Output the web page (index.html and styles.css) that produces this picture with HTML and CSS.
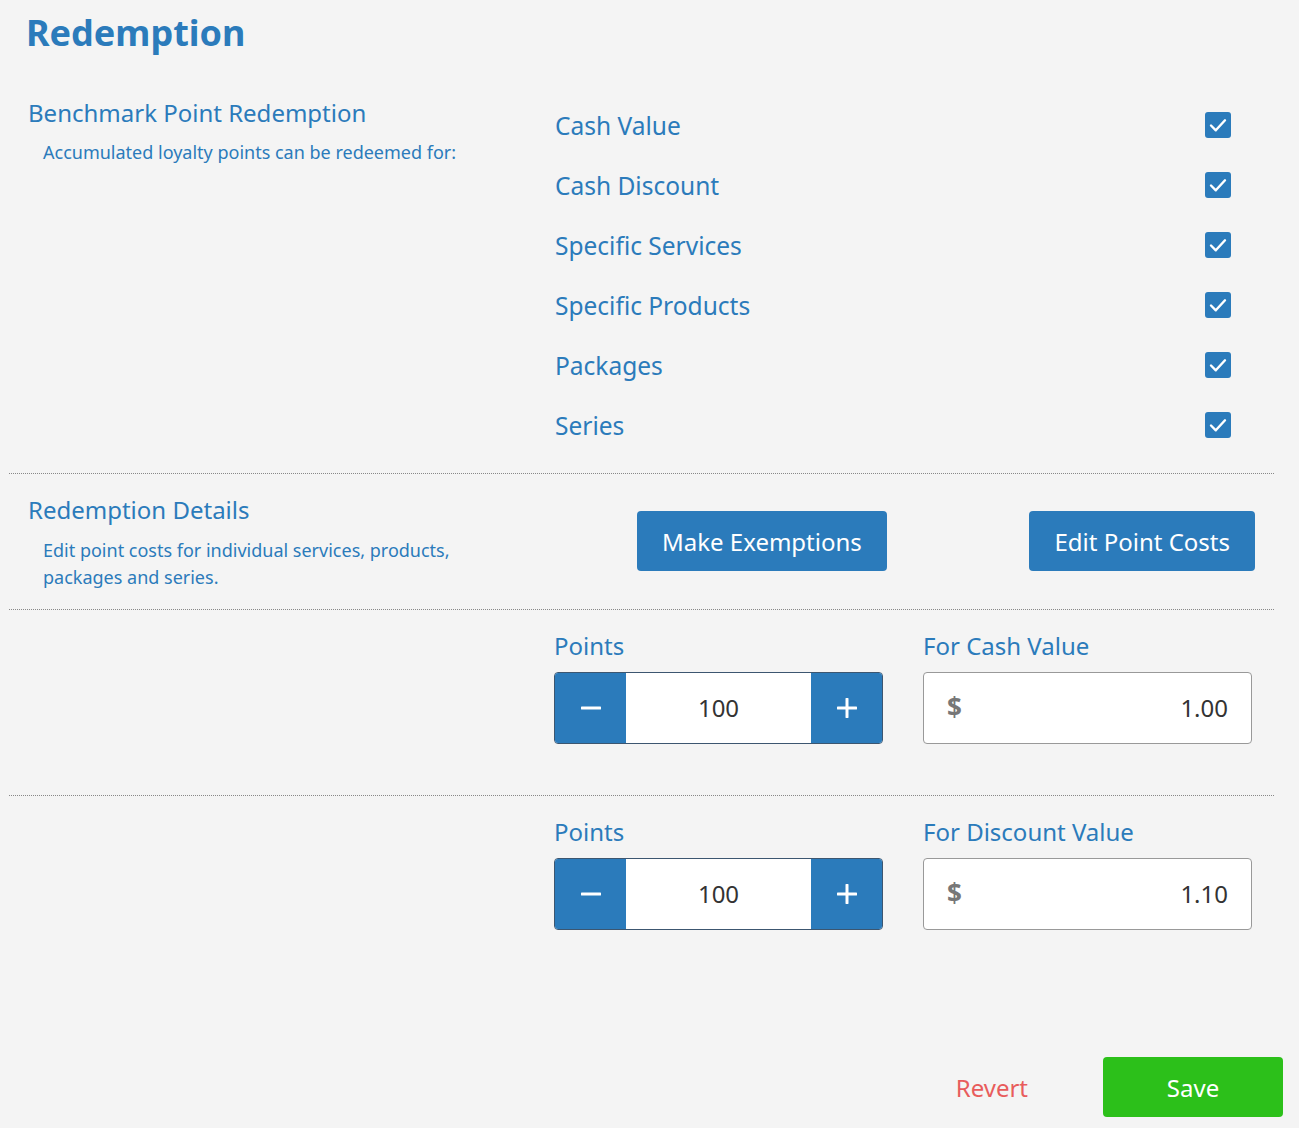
FILE: index.html
```html
<!DOCTYPE html>
<html lang="en">
<head>
    <link rel="stylesheet" href="styles.css">
    <title>Redemption</title>
</head>
<body>
<div class="page">
    <h1 class="title">Redemption</h1>

    <div class="section section-options">
        <div class="left">
            <h2>Benchmark Point Redemption</h2>
            <p>Accumulated loyalty points can be redeemed for:</p>
        </div>
        <div class="right">
            <ul class="options">
                <li><span>Cash Value</span><span class="check"><svg viewBox="0 0 26 26"><path d="M6 13.5 L10.8 18.3 L20 8.3"/></svg></span></li>
                <li><span>Cash Discount</span><span class="check"><svg viewBox="0 0 26 26"><path d="M6 13.5 L10.8 18.3 L20 8.3"/></svg></span></li>
                <li><span>Specific Services</span><span class="check"><svg viewBox="0 0 26 26"><path d="M6 13.5 L10.8 18.3 L20 8.3"/></svg></span></li>
                <li><span>Specific Products</span><span class="check"><svg viewBox="0 0 26 26"><path d="M6 13.5 L10.8 18.3 L20 8.3"/></svg></span></li>
                <li><span>Packages</span><span class="check"><svg viewBox="0 0 26 26"><path d="M6 13.5 L10.8 18.3 L20 8.3"/></svg></span></li>
                <li><span>Series</span><span class="check"><svg viewBox="0 0 26 26"><path d="M6 13.5 L10.8 18.3 L20 8.3"/></svg></span></li>
            </ul>
        </div>
    </div>

    <div class="section section-details">
        <div class="left">
            <h2>Redemption Details</h2>
            <p>Edit point costs for individual services, products, packages and series.</p>
        </div>
        <div class="right buttons">
            <button class="btn">Make Exemptions</button>
            <button class="btn">Edit Point Costs</button>
        </div>
    </div>

    <div class="section section-value">
        <div class="left"></div>
        <div class="right fields">
            <div class="field">
                <label>Points</label>
                <div class="stepper">
                    <span class="step"><svg viewBox="0 0 20 20"><path d="M1 10 H19"/></svg></span>
                    <span class="step-value">100</span>
                    <span class="step"><svg viewBox="0 0 20 20"><path d="M1 10 H19 M10 1 V19"/></svg></span>
                </div>
            </div>
            <div class="field">
                <label>For Cash Value</label>
                <div class="money">
                    <span class="currency">$</span>
                    <span class="amount">1.00</span>
                </div>
            </div>
        </div>
    </div>

    <div class="section section-value last">
        <div class="left"></div>
        <div class="right fields">
            <div class="field">
                <label>Points</label>
                <div class="stepper">
                    <span class="step"><svg viewBox="0 0 20 20"><path d="M1 10 H19"/></svg></span>
                    <span class="step-value">100</span>
                    <span class="step"><svg viewBox="0 0 20 20"><path d="M1 10 H19 M10 1 V19"/></svg></span>
                </div>
            </div>
            <div class="field">
                <label>For Discount Value</label>
                <div class="money">
                    <span class="currency">$</span>
                    <span class="amount">1.10</span>
                </div>
            </div>
        </div>
    </div>

    <div class="footer">
        <button class="revert">Revert</button>
        <button class="save">Save</button>
    </div>
</div>
</body>
</html>
```

FILE: styles.css
```css
html, body {
    margin: 0;
    padding: 0;
}

body {
    font-family: "Noto Sans", "Open Sans", sans-serif;
    color: #2b7bbb;
    background-color: #f4f4f4;
}

.page {
    width: 1265px;
    margin-left: 9px;
}

.title {
    margin: 0;
    padding: 10px 0 0 17px;
    height: 47px;
    font-size: 36px;
    font-weight: 700;
    line-height: 45px;
}

.section {
    display: flex;
    padding-left: 19px;
    border-bottom: 1px dotted #888;
}

.section .left {
    width: 527px;
    flex-shrink: 0;
}

.section .right {
    flex: 1;
}

.section h2 {
    margin: 0;
    font-size: 24px;
    font-weight: 400;
    line-height: 32px;
}

.section p {
    margin: 0;
    padding-left: 15px;
    font-size: 18px;
    line-height: 27px;
    width: 440px;
}

.section-options {
    padding-top: 40px;
    padding-bottom: 18px;
}

.section-options p {
    margin-top: 10px;
}

.options {
    list-style-type: none;
    margin: 0;
    padding: 0;
    margin-top: -2px;
}

.options li {
    display: flex;
    justify-content: space-between;
    align-items: center;
    height: 60px;
    padding-right: 43px;
    font-size: 24.5px;
}

.check {
    width: 26px;
    height: 26px;
    border-radius: 3px;
    background-color: #2b7bbb;
    display: block;
}

.check svg {
    width: 26px;
    height: 26px;
    display: block;
    fill: none;
    stroke: white;
    stroke-width: 2.4;
    stroke-linecap: round;
    stroke-linejoin: round;
}

.section-details {
    padding-top: 20px;
    padding-bottom: 18px;
}

.section-details p {
    margin-top: 11px;
}

.buttons {
    display: flex;
    justify-content: space-between;
    align-items: flex-start;
    padding-left: 82px;
    padding-right: 19px;
    padding-top: 17px;
}

.btn {
    height: 60px;
    padding: 0 25px;
    border: none;
    border-radius: 4px;
    background-color: #2b7bbb;
    color: white;
    font-family: "Noto Sans", "Open Sans", sans-serif;
    font-size: 24px;
}

.section-value {
    padding-top: 20px;
    padding-bottom: 51px;
}

.section-value.last {
    border-bottom: none;
}

.fields {
    display: flex;
    gap: 40px;
    margin-left: -1px;
}

.field label {
    display: block;
    font-size: 24px;
    line-height: 32px;
    margin-bottom: 10px;
}

.stepper {
    display: flex;
    width: 327px;
    height: 70px;
    border: 1px solid #3c5670;
    border-radius: 4px;
    overflow: hidden;
    background-color: white;
}

.step {
    width: 71px;
    background-color: #2b7bbb;
    display: flex;
    align-items: center;
    justify-content: center;
}

.step svg {
    width: 20px;
    height: 20px;
    fill: none;
    stroke: white;
    stroke-width: 3;
    stroke-linecap: round;
}

.step-value {
    flex: 1;
    display: flex;
    align-items: center;
    justify-content: center;
    color: #333;
    font-size: 24px;
    padding-bottom: 2px;
}

.money {
    display: flex;
    justify-content: space-between;
    align-items: center;
    width: 281px;
    height: 68px;
    padding: 0 23px 2px;
    border: 1px solid #999;
    border-radius: 4px;
    background-color: white;
    font-size: 24px;
}

.currency {
    color: #777;
    font-weight: 700;
    font-size: 26px;
}

.amount {
    color: #333;
}

.footer {
    display: flex;
    justify-content: flex-end;
    align-items: center;
    gap: 75px;
    margin-top: 76px;
    margin-right: -9px;
}

.revert {
    border: none;
    background: none;
    color: #e85c5c;
    font-family: "Noto Sans", "Open Sans", sans-serif;
    font-size: 24px;
    padding: 0;
}

.save {
    width: 180px;
    height: 60px;
    border: none;
    border-radius: 4px;
    background-color: #2cc01a;
    color: white;
    font-family: "Noto Sans", "Open Sans", sans-serif;
    font-size: 24px;
}
```
